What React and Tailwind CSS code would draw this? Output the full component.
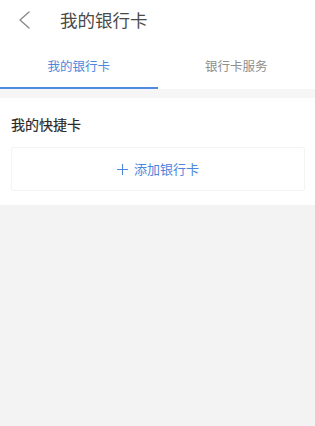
export default function App() {
  const font = { fontFamily: '"Noto Sans CJK SC", "Noto Sans", sans-serif' };
  return (
    <div className="w-[315px] h-[426px] bg-[#f4f3f4] flex flex-col" style={font}>
      <div className="bg-white">
        <div className="h-[40px] flex items-center">
          <div className="w-[60px] pl-[17px] flex items-center">
            <svg width="14" height="18" viewBox="0 0 14 18" fill="none">
              <path d="M12 1 L3 9 L12 17" stroke="#8a8a8a" strokeWidth="1.4" strokeLinecap="round" strokeLinejoin="round" />
            </svg>
          </div>
          <span className="text-[17.5px] leading-none text-[#4a4a4a]">我的银行卡</span>
        </div>
        <div className="flex h-[49px]">
          <div className="flex-1 flex items-center justify-center border-b-2 border-[#4d8ae0] pt-[6px]">
            <span className="text-[12.5px] text-[#4d86dc]">我的银行卡</span>
          </div>
          <div className="flex-1 flex items-center justify-center border-b-2 border-transparent pt-[6px]">
            <span className="text-[12.5px] text-[#8e8e8e]">银行卡服务</span>
          </div>
        </div>
      </div>
      <div className="h-[9px] bg-[#f6f6f7]" />
      <div className="bg-white px-[10px] pt-[16px] pb-[14px]">
        <div className="text-[14px] leading-[20px] text-[#2a2a2a] pl-[1px] [-webkit-text-stroke:0.2px_#2a2a2a]">我的快捷卡</div>
        <div className="mt-[13px] ml-[1px] h-[44px] border border-[#f4f4f6] rounded-[2px] flex items-center justify-center">
          <span className="text-[13px] text-[#4d86dc] flex items-center gap-[6px]">
            <svg width="11" height="11" viewBox="0 0 11 11">
              <path d="M5.5 0 V11 M0 5.5 H11" stroke="#4d86dc" strokeWidth="1.1" />
            </svg>
            添加银行卡
          </span>
        </div>
      </div>
    </div>
  );
}
